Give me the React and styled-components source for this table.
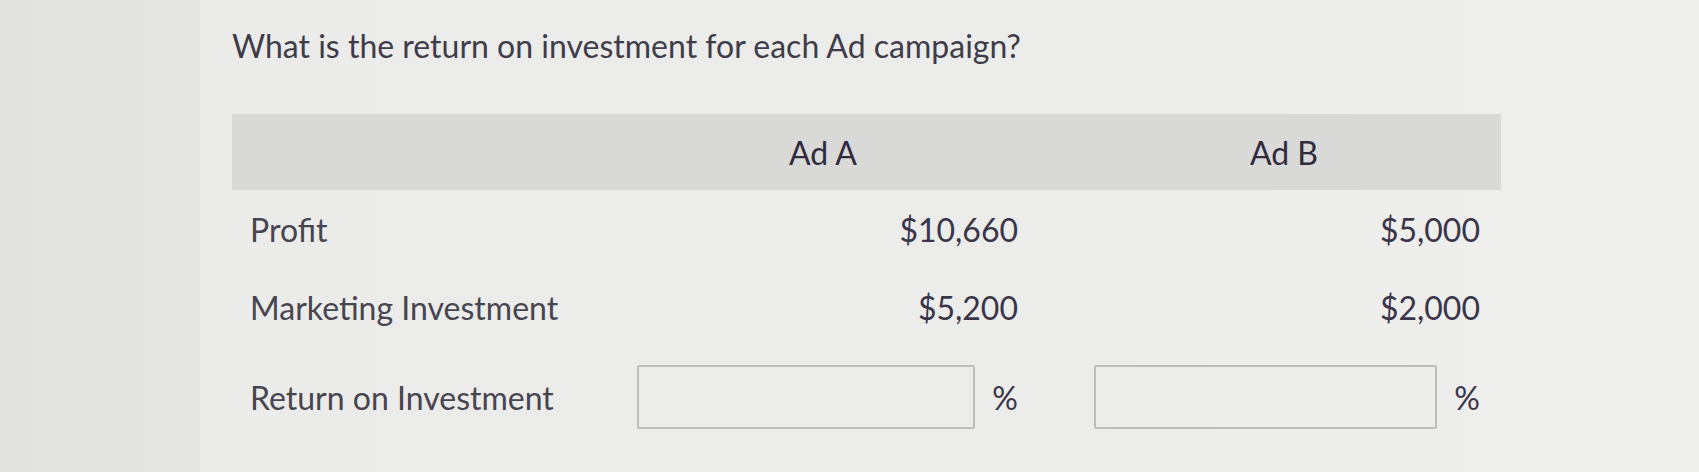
import styled, { createGlobalStyle } from "styled-components";

const GlobalStyle = createGlobalStyle`
  html, body {
    margin: 0;
    padding: 0;
  }
  body {
    width: 1699px;
    height: 472px;
    overflow: hidden;
    background: #e3e3e1;
    font-family: Lato, "Open Sans", sans-serif;
  }
`;

const Screen = styled.div`
  display: flex;
  height: 472px;
`;

const Gutter = styled.div`
  width: 200px;
  flex-shrink: 0;
  background: linear-gradient(90deg, #e2e2e0 0%, #e5e5e3 100%);
`;

const Panel = styled.main`
  flex: 1;
  padding: 26px 0 0 32px;
  background: linear-gradient(90deg, #ebebe9 0%, #ececea 60%, #efefed 100%);
`;

const Question = styled.h1`
  margin: 0 0 48px;
  font-size: 32px;
  font-weight: 400;
  line-height: 40px;
  color: #3f3c4a;
`;

const Table = styled.div`
  display: grid;
  grid-template-columns: 347px 488px 434px;
  width: 1269px;
`;

const HeadCell = styled.div`
  height: 76px;
  background: #d9d9d8;
  display: flex;
  align-items: center;
  justify-content: center;
  font-size: 32px;
  color: #2f2b3d;
`;

const Label = styled.div`
  height: ${(p) => p.$h}px;
  display: flex;
  align-items: center;
  padding-left: 18px;
  font-size: 32px;
  color: #47454f;
`;

const Value = styled.div`
  height: ${(p) => p.$h}px;
  display: flex;
  align-items: center;
  justify-content: flex-end;
  padding-right: ${(p) => p.$right}px;
  padding-left: ${(p) => p.$left}px;
  gap: 17px;
  font-size: 32px;
  color: #3a3548;
`;

const Answer = styled.input`
  box-sizing: border-box;
  flex: 1;
  height: 64px;
  margin: 0;
  border: 2px solid #bdbdbb;
  border-radius: 2px;
  background: transparent;
  outline: none;
`;

const Percent = styled.span`
  font-size: 32px;
  color: #3a3548;
`;

const ads = [
  { name: "Ad A", profit: "$10,660", spend: "$5,200", left: 58, right: 49 },
  { name: "Ad B", profit: "$5,000", spend: "$2,000", left: 27, right: 21 },
];

export default function App() {
  return (
    <>
      <GlobalStyle />
      <Screen>
        <Gutter />
        <Panel>
          <Question>What is the return on investment for each Ad campaign?</Question>
          <Table>
            <HeadCell />
            {ads.map((ad) => (
              <HeadCell key={ad.name}>{ad.name}</HeadCell>
            ))}

            <Label $h={78}>Profit</Label>
            {ads.map((ad) => (
              <Value key={ad.name} $h={78} $left={ad.left} $right={ad.right}>
                {ad.profit}
              </Value>
            ))}

            <Label $h={78}>Marketing Investment</Label>
            {ads.map((ad) => (
              <Value key={ad.name} $h={78} $left={ad.left} $right={ad.right}>
                {ad.spend}
              </Value>
            ))}

            <Label $h={102}>Return on Investment</Label>
            {ads.map((ad) => (
              <Value key={ad.name} $h={102} $left={ad.left} $right={ad.right}>
                <Answer type="text" aria-label={`${ad.name} return on investment`} />
                <Percent>%</Percent>
              </Value>
            ))}
          </Table>
        </Panel>
      </Screen>
    </>
  );
}
